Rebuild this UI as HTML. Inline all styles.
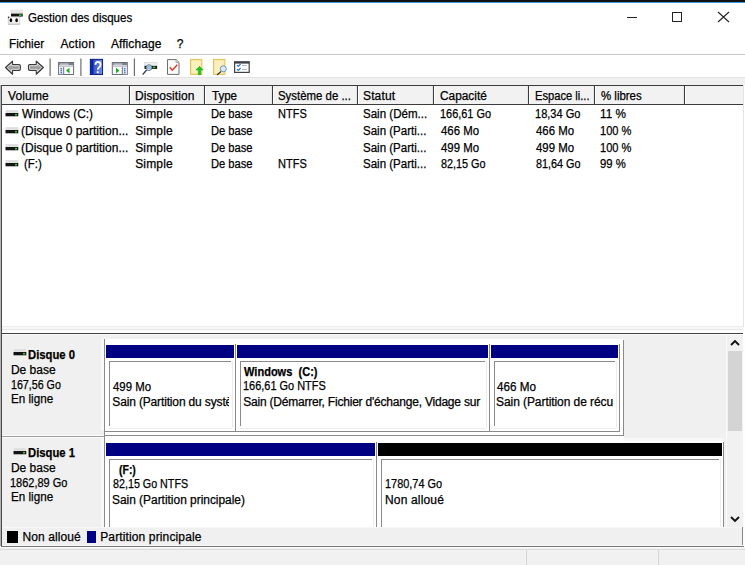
<!DOCTYPE html>
<html><head><meta charset="utf-8"><style>
html,body{margin:0;padding:0;}
body{width:745px;height:565px;position:relative;overflow:hidden;background:#fff;font-family:"Liberation Sans", sans-serif;}
body>div, body>div>div{position:absolute;}
.t{white-space:pre;line-height:16px;-webkit-text-stroke:0.25px currentColor;}
</style></head><body>
<div style="left:0px;top:0px;width:745px;height:2px;background:#101010"></div>
<div style="left:0px;top:2px;width:745px;height:1px;background:#3c9be6"></div>
<svg style="position:absolute;left:0;top:0" width="30" height="30" viewBox="0 0 30 30">
<defs><linearGradient id="dt" x1="0" y1="0" x2="0" y2="1"><stop offset="0" stop-color="#f4f4f4"/><stop offset="1" stop-color="#d8d8d8"/></linearGradient></defs>
<rect x="11" y="10" width="11.7" height="3.7" fill="url(#dt)" stroke="#d0d0d0" stroke-width="0.5"/>
<rect x="11" y="13.7" width="11.7" height="2.9" fill="#141414"/>
<rect x="19" y="14.4" width="2.6" height="1.5" fill="#38c838"/>
<defs><linearGradient id="lb" x1="0" y1="0" x2="0" y2="1"><stop offset="0" stop-color="#ffffff"/><stop offset="0.7" stop-color="#f2f2f2"/><stop offset="1" stop-color="#c8c8c8"/></linearGradient></defs>
<rect x="8.2" y="17" width="11.6" height="7.6" fill="url(#lb)" stroke="#bcbcbc" stroke-width="0.6"/>
<circle cx="8.6" cy="17.4" r="0.8" fill="#333"/>
<ellipse cx="10.9" cy="20.3" rx="1.3" ry="2" fill="#0a0a0a"/>
<ellipse cx="16.6" cy="20.3" rx="1.3" ry="2" fill="#0a0a0a"/>
</svg>
<div class="t" style="left:28.04px;top:9.64px;font-size:12px;font-weight:400;color:#000;transform:scaleX(0.9579);transform-origin:0 0;">Gestion des disques</div>
<div style="left:627px;top:17px;width:10px;height:1px;background:#222"></div>
<div style="left:672px;top:12px;width:8px;height:8px;border:1px solid #222"></div>
<svg style="position:absolute;left:716.5px;top:11px" width="13" height="12" viewBox="0 0 13 12">
<path d="M1 1 L12 11 M12 1 L1 11" stroke="#222" stroke-width="1.1"/></svg>
<div class="t" style="left:9.23px;top:35.64px;font-size:12px;font-weight:400;color:#000;transform:scaleX(0.9743);transform-origin:0 0;">Fichier</div>
<div class="t" style="left:60.40px;top:35.64px;font-size:12px;font-weight:400;color:#000;letter-spacing:0.220px;">Action</div>
<div class="t" style="left:110.90px;top:35.64px;font-size:12px;font-weight:400;color:#000;letter-spacing:0.087px;">Affichage</div>
<div class="t" style="left:176.70px;top:35.64px;font-size:12px;font-weight:400;color:#000;">?</div>
<div style="left:0px;top:54px;width:745px;height:1px;background:#c9c9c9"></div>
<div style="left:0px;top:55px;width:745px;height:22px;background:#fff"></div>
<div style="left:0px;top:77px;width:745px;height:1px;background:#e3e3e3"></div>
<div style="left:0px;top:78px;width:745px;height:7px;background:#f0f0f0"></div>
<svg style="position:absolute;left:0;top:0" width="260" height="80" viewBox="0 0 260 80">
<defs>
<linearGradient id="ag" x1="0" y1="0" x2="0" y2="1"><stop offset="0" stop-color="#d8d8d8"/><stop offset="0.5" stop-color="#9a9a9a"/><stop offset="1" stop-color="#cccccc"/></linearGradient>
<linearGradient id="hb" x1="0" y1="0" x2="1" y2="0"><stop offset="0" stop-color="#2040c0"/><stop offset="1" stop-color="#7090e8"/></linearGradient>
</defs>
<!-- back arrow -->
<path d="M5.5 67.5 L12.5 61.2 L12.5 64.6 L19 64.6 Q20.3 64.6 20.3 66 L20.3 69 Q20.3 70.4 19 70.4 L12.5 70.4 L12.5 74.2 Z" fill="url(#ag)" stroke="#3a3a3a" stroke-width="1.2" stroke-linejoin="round"/>
<path d="M7.2 67.5 L11.6 63.5 L11.6 65.6 L18.8 65.6 Q19.3 65.6 19.3 66.3 L19.3 68.7 Q19.3 69.4 18.8 69.4 L11.6 69.4 L11.6 71.8 Z" fill="none" stroke="#ececec" stroke-width="0.7" stroke-linejoin="round"/>
<!-- forward arrow -->
<path d="M43.3 67.5 L36.3 61.2 L36.3 64.6 L29.8 64.6 Q28.5 64.6 28.5 66 L28.5 69 Q28.5 70.4 29.8 70.4 L36.3 70.4 L36.3 74.2 Z" fill="url(#ag)" stroke="#3a3a3a" stroke-width="1.2" stroke-linejoin="round"/>
<path d="M41.6 67.5 L37.2 63.5 L37.2 65.6 L30 65.6 Q29.5 65.6 29.5 66.3 L29.5 68.7 Q29.5 69.4 30 69.4 L37.2 69.4 L37.2 71.8 Z" fill="none" stroke="#ececec" stroke-width="0.7" stroke-linejoin="round"/>
<!-- separators -->
<rect x="49.5" y="58.5" width="1.2" height="17.5" fill="#6e6e6e"/>
<rect x="80.3" y="58.5" width="1.2" height="17.5" fill="#6e6e6e"/>
<rect x="133.8" y="58.5" width="1.2" height="17.5" fill="#6e6e6e"/>
<!-- window icon left -->
<rect x="58.6" y="62.5" width="15" height="12" fill="#fff" stroke="#6a6e78" stroke-width="1"/>
<rect x="59" y="63" width="14.2" height="2.2" fill="#7a808c"/>
<rect x="60" y="63.6" width="8.5" height="1" fill="#e8e8e8"/>
<rect x="59" y="65.6" width="14.2" height="1.2" fill="#b8bcc4"/>
<rect x="59" y="67" width="4.2" height="7.2" fill="#e6ebf4"/>
<rect x="63.2" y="67" width="1" height="7.2" fill="#6a6e78"/>
<circle cx="61.2" cy="68.8" r="0.8" fill="#2a5cc8"/><circle cx="61.2" cy="70.8" r="0.8" fill="#2a5cc8"/><circle cx="61.2" cy="72.8" r="0.8" fill="#2a5cc8"/>
<path d="M66 70.6 L69.5 67.8 L69.5 73.4 Z" fill="#22a822"/>
<!-- help book -->
<rect x="90.3" y="59.3" width="12.3" height="15.3" fill="url(#hb)" stroke="#000c70" stroke-width="0.9"/>
<rect x="90.8" y="59.8" width="2.6" height="14.3" fill="#0828a8"/>
<path d="M95.3 64.9 Q95.4 62 97.9 62 Q100.5 62 100.5 64.5 Q100.5 66.3 98.8 67.4 Q97.7 68.1 97.7 69.8" fill="none" stroke="#1a2a80" stroke-width="2" transform="translate(-0.5,0.3)" opacity="0.5"/>
<path d="M95.3 64.9 Q95.4 62 97.9 62 Q100.5 62 100.5 64.5 Q100.5 66.3 98.8 67.4 Q97.7 68.1 97.7 69.8" fill="none" stroke="#fff" stroke-width="1.8"/>
<rect x="96.8" y="71.2" width="1.9" height="1.9" fill="#fff"/>
<!-- window icon right -->
<rect x="112.3" y="62.5" width="15" height="12" fill="#fff" stroke="#6a6e78" stroke-width="1"/>
<rect x="112.7" y="63" width="14.2" height="2.2" fill="#7a808c"/>
<rect x="113.7" y="63.6" width="8.5" height="1" fill="#e8e8e8"/>
<rect x="112.7" y="65.6" width="14.2" height="1.2" fill="#b8bcc4"/>
<rect x="122.8" y="67" width="4.2" height="7.2" fill="#e6ebf4"/>
<rect x="121.8" y="67" width="1" height="7.2" fill="#6a6e78"/>
<circle cx="124.8" cy="68.8" r="0.8" fill="#2a5cc8"/><circle cx="124.8" cy="70.8" r="0.8" fill="#2a5cc8"/><circle cx="124.8" cy="72.8" r="0.8" fill="#2a5cc8"/>
<path d="M119.5 70.6 L116 67.8 L116 73.4 Z" fill="#22a822"/>
<!-- drive magnifier -->
<rect x="144.5" y="62.3" width="12.6" height="3.6" fill="#eeeeee" stroke="#d0d0d0" stroke-width="0.5"/>
<rect x="144.5" y="65.9" width="12.6" height="3" fill="#111"/>
<rect x="153" y="66.6" width="2.4" height="1.6" fill="#3ac43a"/>
<line x1="146.6" y1="70" x2="142.6" y2="74.6" stroke="#2a3a4a" stroke-width="1.3"/>
<circle cx="149" cy="67.6" r="2.9" fill="#bcd8ec" fill-opacity="0.85" stroke="#5a7a98" stroke-width="0.9"/>
<!-- doc check -->
<path d="M167.5 59.6 L176.2 59.6 L179 62.4 L179 74.4 L167.5 74.4 Z" fill="#fafafa" stroke="#6e6e6e" stroke-width="1"/>
<path d="M176 59.8 L176 62.6 L178.8 62.6" fill="#e0e0e0" stroke="#888" stroke-width="0.7"/>
<path d="M169.8 67.2 L172.3 70.2 L177.3 64.8" fill="none" stroke="#e03a2a" stroke-width="1.5"/>
<!-- yellow doc up -->
<rect x="190.5" y="59.4" width="11.4" height="15" fill="#fbe6a0" stroke="#e2c45a" stroke-width="1"/>
<rect x="192" y="61" width="8.5" height="12" fill="#fdf0c0"/>
<path d="M199.5 66.3 L203.2 70 L200.8 70 L200.8 74.8 L198.2 74.8 L198.2 70 L195.8 70 Z" fill="#1cc41c" stroke="#0e9a0e" stroke-width="0.4"/>
<!-- yellow doc magnifier -->
<rect x="213.5" y="59.4" width="11.4" height="15" fill="#fbe6a0" stroke="#e2c45a" stroke-width="1"/>
<rect x="215" y="61" width="8.5" height="12" fill="#fdf0c0"/>
<line x1="221" y1="71.5" x2="217" y2="75" stroke="#2a3a4a" stroke-width="1.2"/>
<circle cx="223.3" cy="68.8" r="3" fill="#d8ecf8" stroke="#6a8aa8" stroke-width="0.9"/>
<!-- checklist -->
<rect x="234.6" y="61.8" width="14.6" height="10.6" fill="#fff" stroke="#3e4248" stroke-width="1.2"/>
<rect x="234.6" y="61.8" width="14.6" height="1.8" fill="#3e4248"/>
<path d="M237 65.2 L238.3 66.5 L240.6 64" fill="none" stroke="#2a78d0" stroke-width="1.2"/>
<path d="M237 69.2 L238.3 70.5 L240.6 68" fill="none" stroke="#2a78d0" stroke-width="1.2"/>
<rect x="242" y="65" width="4.8" height="1" fill="#b8b8b8"/>
<rect x="242" y="69" width="4.8" height="1" fill="#b8b8b8"/>
</svg>

<div style="left:1px;top:85px;width:743px;height:241px;background:#fff"></div>
<div style="left:1px;top:85px;width:743px;height:1px;background:#3c3c3c"></div>
<div style="left:0px;top:85px;width:1px;height:461px;background:#b4b4b4"></div>
<div style="left:1px;top:85px;width:1px;height:462px;background:#4a4a4a"></div>
<div style="left:743px;top:85px;width:1px;height:242px;background:#e4e4e4"></div>
<div style="left:2px;top:86px;width:741px;height:18px;background:#f2f2f2"></div>
<div style="left:2px;top:104px;width:741px;height:1px;background:#3c3c3c"></div>
<div style="left:129px;top:86px;width:1px;height:18px;background:#3c3c3c"></div>
<div style="left:130px;top:86px;width:1px;height:18px;background:#ffffff"></div>
<div style="left:128px;top:86px;width:1px;height:18px;background:#e6e6e6"></div>
<div style="left:204px;top:86px;width:1px;height:18px;background:#3c3c3c"></div>
<div style="left:205px;top:86px;width:1px;height:18px;background:#ffffff"></div>
<div style="left:203px;top:86px;width:1px;height:18px;background:#e6e6e6"></div>
<div style="left:272px;top:86px;width:1px;height:18px;background:#3c3c3c"></div>
<div style="left:273px;top:86px;width:1px;height:18px;background:#ffffff"></div>
<div style="left:271px;top:86px;width:1px;height:18px;background:#e6e6e6"></div>
<div style="left:357px;top:86px;width:1px;height:18px;background:#3c3c3c"></div>
<div style="left:358px;top:86px;width:1px;height:18px;background:#ffffff"></div>
<div style="left:356px;top:86px;width:1px;height:18px;background:#e6e6e6"></div>
<div style="left:433px;top:86px;width:1px;height:18px;background:#3c3c3c"></div>
<div style="left:434px;top:86px;width:1px;height:18px;background:#ffffff"></div>
<div style="left:432px;top:86px;width:1px;height:18px;background:#e6e6e6"></div>
<div style="left:528px;top:86px;width:1px;height:18px;background:#3c3c3c"></div>
<div style="left:529px;top:86px;width:1px;height:18px;background:#ffffff"></div>
<div style="left:527px;top:86px;width:1px;height:18px;background:#e6e6e6"></div>
<div style="left:594px;top:86px;width:1px;height:18px;background:#3c3c3c"></div>
<div style="left:595px;top:86px;width:1px;height:18px;background:#ffffff"></div>
<div style="left:593px;top:86px;width:1px;height:18px;background:#e6e6e6"></div>
<div style="left:684px;top:86px;width:1px;height:18px;background:#3c3c3c"></div>
<div style="left:685px;top:86px;width:1px;height:18px;background:#ffffff"></div>
<div style="left:683px;top:86px;width:1px;height:18px;background:#e6e6e6"></div>
<div class="t" style="left:8.00px;top:88.34px;font-size:12px;font-weight:400;color:#000;letter-spacing:0.140px;">Volume</div>
<div class="t" style="left:135.00px;top:88.34px;font-size:12px;font-weight:400;color:#000;letter-spacing:0.070px;">Disposition</div>
<div class="t" style="left:212.00px;top:88.34px;font-size:12px;font-weight:400;color:#000;transform:scaleX(0.9615);transform-origin:0 0;">Type</div>
<div class="t" style="left:277.75px;top:88.34px;font-size:12px;font-weight:400;color:#000;transform:scaleX(0.9507);transform-origin:0 0;">Système de ...</div>
<div class="t" style="left:363.00px;top:88.34px;font-size:12px;font-weight:400;color:#000;letter-spacing:0.140px;">Statut</div>
<div class="t" style="left:439.51px;top:88.34px;font-size:12px;font-weight:400;color:#000;transform:scaleX(0.9891);transform-origin:0 0;">Capacité</div>
<div class="t" style="left:534.57px;top:88.34px;font-size:12px;font-weight:400;color:#000;transform:scaleX(0.9298);transform-origin:0 0;">Espace li...</div>
<div class="t" style="left:601.00px;top:88.34px;font-size:12px;font-weight:400;color:#000;transform:scaleX(0.9524);transform-origin:0 0;">% libres</div>
<svg style="position:absolute;left:5px;top:109.9px" width="14" height="9" viewBox="0 0 14 9">
<rect x="0.5" y="0" width="12.8" height="3" fill="#dedede" stroke="#f4f4f4" stroke-width="0.4"/>
<rect x="0.5" y="3" width="12.8" height="3.3" fill="#141414"/>
<rect x="10" y="3.9" width="2.1" height="1.6" fill="#3ac43a"/></svg>
<div class="t" style="left:22.00px;top:105.94px;font-size:12px;font-weight:400;color:#000;transform:scaleX(0.9859);transform-origin:0 0;">Windows (C:)</div>
<div class="t" style="left:135.20px;top:105.94px;font-size:12px;font-weight:400;color:#000;letter-spacing:0.160px;">Simple</div>
<div class="t" style="left:211.07px;top:105.94px;font-size:12px;font-weight:400;color:#000;transform:scaleX(0.9302);transform-origin:0 0;">De base</div>
<div class="t" style="left:277.78px;top:105.94px;font-size:12px;font-weight:400;color:#000;transform:scaleX(0.9167);transform-origin:0 0;">NTFS</div>
<div class="t" style="left:363.04px;top:105.94px;font-size:12px;font-weight:400;color:#000;transform:scaleX(0.9615);transform-origin:0 0;">Sain (Dém...</div>
<div class="t" style="left:439.59px;top:105.94px;font-size:12px;font-weight:400;color:#000;transform:scaleX(0.9091);transform-origin:0 0;">166,61 Go</div>
<div class="t" style="left:534.58px;top:105.94px;font-size:12px;font-weight:400;color:#000;transform:scaleX(0.9208);transform-origin:0 0;">18,34 Go</div>
<div class="t" style="left:600.02px;top:105.94px;font-size:12px;font-weight:400;color:#000;transform:scaleX(0.9800);transform-origin:0 0;">11 %</div>
<svg style="position:absolute;left:5px;top:126.7px" width="14" height="9" viewBox="0 0 14 9">
<rect x="0.5" y="0" width="12.8" height="3" fill="#dedede" stroke="#f4f4f4" stroke-width="0.4"/>
<rect x="0.5" y="3" width="12.8" height="3.3" fill="#141414"/>
<rect x="10" y="3.9" width="2.1" height="1.6" fill="#3ac43a"/></svg>
<div class="t" style="left:21.00px;top:122.74px;font-size:12px;font-weight:400;color:#000;letter-spacing:0.000px;">(Disque 0 partition...</div>
<div class="t" style="left:135.20px;top:122.74px;font-size:12px;font-weight:400;color:#000;letter-spacing:0.160px;">Simple</div>
<div class="t" style="left:211.07px;top:122.74px;font-size:12px;font-weight:400;color:#000;transform:scaleX(0.9302);transform-origin:0 0;">De base</div>
<div class="t" style="left:363.04px;top:122.74px;font-size:12px;font-weight:400;color:#000;transform:scaleX(0.9609);transform-origin:0 0;">Sain (Parti...</div>
<div class="t" style="left:440.50px;top:122.74px;font-size:12px;font-weight:400;color:#000;transform:scaleX(0.9500);transform-origin:0 0;">466 Mo</div>
<div class="t" style="left:535.50px;top:122.74px;font-size:12px;font-weight:400;color:#000;transform:scaleX(0.9500);transform-origin:0 0;">466 Mo</div>
<div class="t" style="left:600.08px;top:122.74px;font-size:12px;font-weight:400;color:#000;transform:scaleX(0.9242);transform-origin:0 0;">100 %</div>
<svg style="position:absolute;left:5px;top:143.5px" width="14" height="9" viewBox="0 0 14 9">
<rect x="0.5" y="0" width="12.8" height="3" fill="#dedede" stroke="#f4f4f4" stroke-width="0.4"/>
<rect x="0.5" y="3" width="12.8" height="3.3" fill="#141414"/>
<rect x="10" y="3.9" width="2.1" height="1.6" fill="#3ac43a"/></svg>
<div class="t" style="left:21.00px;top:139.54px;font-size:12px;font-weight:400;color:#000;letter-spacing:0.000px;">(Disque 0 partition...</div>
<div class="t" style="left:135.20px;top:139.54px;font-size:12px;font-weight:400;color:#000;letter-spacing:0.160px;">Simple</div>
<div class="t" style="left:211.07px;top:139.54px;font-size:12px;font-weight:400;color:#000;transform:scaleX(0.9302);transform-origin:0 0;">De base</div>
<div class="t" style="left:363.04px;top:139.54px;font-size:12px;font-weight:400;color:#000;transform:scaleX(0.9609);transform-origin:0 0;">Sain (Parti...</div>
<div class="t" style="left:440.50px;top:139.54px;font-size:12px;font-weight:400;color:#000;transform:scaleX(0.9500);transform-origin:0 0;">499 Mo</div>
<div class="t" style="left:535.50px;top:139.54px;font-size:12px;font-weight:400;color:#000;transform:scaleX(0.9500);transform-origin:0 0;">499 Mo</div>
<div class="t" style="left:600.08px;top:139.54px;font-size:12px;font-weight:400;color:#000;transform:scaleX(0.9242);transform-origin:0 0;">100 %</div>
<svg style="position:absolute;left:5px;top:160.3px" width="14" height="9" viewBox="0 0 14 9">
<rect x="0.5" y="0" width="12.8" height="3" fill="#dedede" stroke="#f4f4f4" stroke-width="0.4"/>
<rect x="0.5" y="3" width="12.8" height="3.3" fill="#141414"/>
<rect x="10" y="3.9" width="2.1" height="1.6" fill="#3ac43a"/></svg>
<div class="t" style="left:24.05px;top:156.34px;font-size:12px;font-weight:400;color:#000;transform:scaleX(0.9529);transform-origin:0 0;">(F:)</div>
<div class="t" style="left:135.20px;top:156.34px;font-size:12px;font-weight:400;color:#000;letter-spacing:0.160px;">Simple</div>
<div class="t" style="left:211.07px;top:156.34px;font-size:12px;font-weight:400;color:#000;transform:scaleX(0.9302);transform-origin:0 0;">De base</div>
<div class="t" style="left:277.78px;top:156.34px;font-size:12px;font-weight:400;color:#000;transform:scaleX(0.9167);transform-origin:0 0;">NTFS</div>
<div class="t" style="left:363.04px;top:156.34px;font-size:12px;font-weight:400;color:#000;transform:scaleX(0.9609);transform-origin:0 0;">Sain (Parti...</div>
<div class="t" style="left:440.50px;top:156.34px;font-size:12px;font-weight:400;color:#000;transform:scaleX(0.9020);transform-origin:0 0;">82,15 Go</div>
<div class="t" style="left:535.50px;top:156.34px;font-size:12px;font-weight:400;color:#000;transform:scaleX(0.9020);transform-origin:0 0;">81,64 Go</div>
<div class="t" style="left:600.06px;top:156.34px;font-size:12px;font-weight:400;color:#000;transform:scaleX(0.9423);transform-origin:0 0;">99 %</div>
<div style="left:2px;top:326px;width:741px;height:1px;background:#ececec"></div>
<div style="left:2px;top:327px;width:741px;height:6px;background:#f8f8f8"></div>
<div style="left:2px;top:329px;width:741px;height:1px;background:#e8e8e8"></div>
<div style="left:2px;top:331px;width:741px;height:2px;background:#ffffff"></div>
<div style="left:2px;top:333px;width:741px;height:1px;background:#404040"></div>
<div style="left:2px;top:334px;width:741px;height:212px;background:#f0f0f0"></div>
<div style="left:2px;top:334px;width:741px;height:1px;background:#fcfcfc"></div>
<div style="left:101px;top:339px;width:3px;height:92px;background:#f8f8f8"></div>
<svg style="position:absolute;left:13px;top:348.8px" width="14" height="9" viewBox="0 0 14 9">
<rect x="0.5" y="0" width="12.8" height="3" fill="#dedede" stroke="#f4f4f4" stroke-width="0.4"/>
<rect x="0.5" y="3" width="12.8" height="3.3" fill="#141414"/>
<rect x="10" y="3.9" width="2.1" height="1.6" fill="#3ac43a"/></svg>
<div class="t" style="left:28.06px;top:347.04px;font-size:12px;font-weight:700;color:#000;transform:scaleX(0.9388);transform-origin:0 0;">Disque 0</div>
<div class="t" style="left:10.90px;top:362.04px;font-size:12px;font-weight:400;color:#000;">De base</div>
<div class="t" style="left:11.01px;top:376.74px;font-size:12px;font-weight:400;color:#000;transform:scaleX(0.8891);transform-origin:0 0;">167,56 Go</div>
<div class="t" style="left:10.93px;top:391.44px;font-size:12px;font-weight:400;color:#000;transform:scaleX(0.9714);transform-origin:0 0;">En ligne</div>
<div style="left:104px;top:339px;width:1px;height:97px;background:#8a8a8a"></div>
<div style="left:105px;top:339px;width:519px;height:96px;background:#fff"></div>
<div style="left:623px;top:340px;width:1px;height:96px;background:#8a8a8a"></div>
<div style="left:104px;top:435px;width:520px;height:1px;background:#8a8a8a"></div>
<div style="left:106px;top:345px;width:128px;height:13px;background:#000082"></div>
<div style="left:235px;top:344px;width:1px;height:88px;background:#8a8a8a"></div>
<div style="left:104px;top:431px;width:132px;height:1px;background:#8a8a8a"></div>
<div style="left:109px;top:361px;width:122px;height:1px;background:#8a8a8a"></div>
<div style="left:109px;top:361px;width:1px;height:65px;background:#8a8a8a"></div>
<div style="left:232px;top:361px;width:1px;height:67px;background:#ececec"></div>
<div style="left:109px;top:428px;width:123px;height:1px;background:#ececec"></div>
<div style="left:237px;top:345px;width:251px;height:13px;background:#000082"></div>
<div style="left:489px;top:344px;width:1px;height:88px;background:#8a8a8a"></div>
<div style="left:235px;top:431px;width:255px;height:1px;background:#8a8a8a"></div>
<div style="left:240px;top:361px;width:245px;height:1px;background:#8a8a8a"></div>
<div style="left:240px;top:361px;width:1px;height:65px;background:#8a8a8a"></div>
<div style="left:486px;top:361px;width:1px;height:67px;background:#ececec"></div>
<div style="left:240px;top:428px;width:246px;height:1px;background:#ececec"></div>
<div style="left:491px;top:345px;width:127px;height:13px;background:#000082"></div>
<div style="left:619px;top:344px;width:1px;height:88px;background:#8a8a8a"></div>
<div style="left:489px;top:431px;width:131px;height:1px;background:#8a8a8a"></div>
<div style="left:494px;top:361px;width:121px;height:1px;background:#8a8a8a"></div>
<div style="left:494px;top:361px;width:1px;height:65px;background:#8a8a8a"></div>
<div style="left:616px;top:361px;width:1px;height:67px;background:#ececec"></div>
<div style="left:494px;top:428px;width:122px;height:1px;background:#ececec"></div>
<div style="left:110px;top:362px;width:118.5px;height:65px;overflow:hidden">
<div class="t" style="left:3.30px;top:16.64px;font-size:12px;font-weight:400;color:#000;transform:scaleX(0.9500);transform-origin:0 0;">499 Mo</div>
<div class="t" style="left:2.30px;top:31.84px;font-size:12px;font-weight:400;color:#000;letter-spacing:-0.15px">Sain (Partition du système EFI)</div>
</div>
<div style="left:240px;top:362px;width:241.5px;height:65px;overflow:hidden">
<div class="t" style="left:4.20px;top:1.84px;font-size:12px;font-weight:700;color:#000;transform:scaleX(0.9200);transform-origin:0 0;">Windows  (C:)</div>
<div class="t" style="left:3.29px;top:16.34px;font-size:12px;font-weight:400;color:#000;transform:scaleX(0.9124);transform-origin:0 0;">166,61 Go NTFS</div>
<div class="t" style="left:3.20px;top:31.84px;font-size:12px;font-weight:400;color:#000;letter-spacing:-0.21px">Sain (Démarrer, Fichier d'échange, Vidage sur incident, Partition principale)</div>
</div>
<div style="left:495px;top:362px;width:117.6px;height:65px;overflow:hidden">
<div class="t" style="left:2.00px;top:16.64px;font-size:12px;font-weight:400;color:#000;transform:scaleX(0.9725);transform-origin:0 0;">466 Mo</div>
<div class="t" style="left:1.00px;top:31.84px;font-size:12px;font-weight:400;color:#000;letter-spacing:-0.07px">Sain (Partition de récupération)</div>
</div>
<div style="left:2px;top:435px;width:102px;height:1px;background:#fbfbfb"></div>
<div style="left:2px;top:436px;width:102px;height:1px;background:#a0a0a0"></div>
<div style="left:2px;top:437px;width:102px;height:1px;background:#fbfbfb"></div>
<div style="left:101px;top:437px;width:3px;height:91px;background:#f8f8f8"></div>
<svg style="position:absolute;left:13px;top:447.5px" width="14" height="9" viewBox="0 0 14 9">
<rect x="0.5" y="0" width="12.8" height="3" fill="#dedede" stroke="#f4f4f4" stroke-width="0.4"/>
<rect x="0.5" y="3" width="12.8" height="3.3" fill="#141414"/>
<rect x="10" y="3.9" width="2.1" height="1.6" fill="#3ac43a"/></svg>
<div class="t" style="left:28.06px;top:445.34px;font-size:12px;font-weight:700;color:#000;transform:scaleX(0.9388);transform-origin:0 0;">Disque 1</div>
<div class="t" style="left:10.90px;top:460.04px;font-size:12px;font-weight:400;color:#000;">De base</div>
<div class="t" style="left:10.29px;top:474.74px;font-size:12px;font-weight:400;color:#000;transform:scaleX(0.9148);transform-origin:0 0;">1862,89 Go</div>
<div class="t" style="left:10.93px;top:489.44px;font-size:12px;font-weight:400;color:#000;transform:scaleX(0.9714);transform-origin:0 0;">En ligne</div>
<div style="left:104px;top:436px;width:1px;height:92px;background:#8a8a8a"></div>
<div style="left:105px;top:438px;width:619px;height:90px;background:#fff"></div>
<div style="left:105px;top:436px;width:519px;height:2px;background:#fff"></div>
<div style="left:624px;top:438px;width:100px;height:3px;background:#f8f8f8"></div>
<div style="left:106px;top:443px;width:269px;height:13px;background:#000082"></div>
<div style="left:376px;top:442px;width:1px;height:99px;background:#8a8a8a"></div>
<div style="left:104px;top:540px;width:273px;height:1px;background:#8a8a8a"></div>
<div style="left:109px;top:459px;width:263px;height:1px;background:#8a8a8a"></div>
<div style="left:109px;top:459px;width:1px;height:76px;background:#8a8a8a"></div>
<div style="left:373px;top:459px;width:1px;height:78px;background:#ececec"></div>
<div style="left:109px;top:537px;width:264px;height:1px;background:#ececec"></div>
<div style="left:378px;top:443px;width:344px;height:13px;background:#000000"></div>
<div style="left:723px;top:442px;width:1px;height:99px;background:#8a8a8a"></div>
<div style="left:376px;top:540px;width:348px;height:1px;background:#8a8a8a"></div>
<div style="left:381px;top:459px;width:338px;height:1px;background:#8a8a8a"></div>
<div style="left:381px;top:459px;width:1px;height:76px;background:#8a8a8a"></div>
<div style="left:720px;top:459px;width:1px;height:78px;background:#ececec"></div>
<div style="left:381px;top:537px;width:339px;height:1px;background:#ececec"></div>
<div class="t" style="left:118.83px;top:461.84px;font-size:12px;font-weight:700;color:#000;transform:scaleX(0.8722);transform-origin:0 0;">(F:)</div>
<div class="t" style="left:113.40px;top:476.34px;font-size:12px;font-weight:400;color:#000;transform:scaleX(0.8940);transform-origin:0 0;">82,15 Go NTFS</div>
<div class="t" style="left:112.41px;top:491.84px;font-size:12px;font-weight:400;color:#000;transform:scaleX(0.9917);transform-origin:0 0;">Sain (Partition principale)</div>
<div class="t" style="left:385.09px;top:476.34px;font-size:12px;font-weight:400;color:#000;transform:scaleX(0.9098);transform-origin:0 0;">1780,74 Go</div>
<div class="t" style="left:385.00px;top:491.84px;font-size:12px;font-weight:400;color:#000;letter-spacing:0.167px;">Non alloué</div>
<div style="left:726px;top:335px;width:17px;height:193px;background:#f1f1f1"></div>
<div style="left:726px;top:335px;width:1px;height:193px;background:#fafafa"></div>
<div style="left:743px;top:334px;width:2px;height:213px;background:#fdfdfd"></div>
<div style="left:728px;top:351px;width:14px;height:80px;background:#d4d4d4"></div>
<svg style="position:absolute;left:729px;top:338px" width="12" height="10" viewBox="0 0 12 10">
<path d="M2 7 L6 3 L10 7" stroke="#111" stroke-width="1.9" fill="none"/></svg>
<svg style="position:absolute;left:729px;top:514px" width="12" height="10" viewBox="0 0 12 10">
<path d="M2 3 L6 7 L10 3" stroke="#111" stroke-width="1.9" fill="none"/></svg>
<div style="left:2px;top:527px;width:741px;height:19px;background:#f0f0f0"></div>
<div style="left:2px;top:527px;width:741px;height:1px;background:#f7f7f7"></div>
<div style="left:742px;top:527px;width:1px;height:20px;background:#8a8a8a"></div>
<div style="left:2px;top:545px;width:741px;height:1px;background:#fafafa"></div>
<div style="left:1px;top:546px;width:743px;height:1px;background:#767676"></div>
<div style="left:7px;top:531px;width:10.5px;height:11.5px;background:#000"></div>
<div class="t" style="left:22.40px;top:529.24px;font-size:12px;font-weight:400;color:#000;letter-spacing:0.100px;">Non alloué</div>
<div style="left:86.6px;top:531px;width:9.5px;height:11.5px;background:#000082"></div>
<div class="t" style="left:100.20px;top:529.24px;font-size:12px;font-weight:400;color:#000;letter-spacing:0.132px;">Partition principale</div>
<div style="left:0px;top:547px;width:745px;height:18px;background:#f1f1f1"></div>
<div style="left:0px;top:547px;width:745px;height:1px;background:#fbfbfb"></div>
<div style="left:0px;top:549px;width:745px;height:1px;background:#dcdcdc"></div>
<div style="left:526px;top:550px;width:1px;height:15px;background:#d6d6d6"></div>
<div style="left:658px;top:550px;width:1px;height:15px;background:#d6d6d6"></div>
</body></html>
